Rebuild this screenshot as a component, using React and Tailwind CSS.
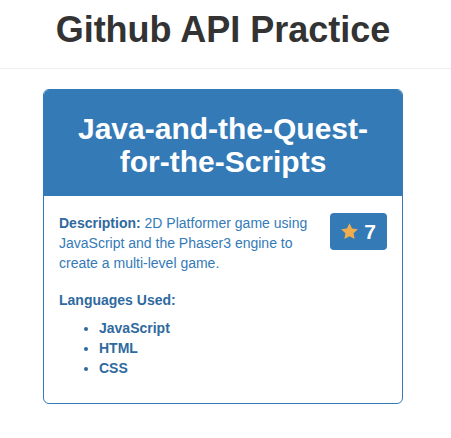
import React from 'react';

const Star = () => (
  <svg viewBox="0 0 24 24" className="w-[19px] h-[19px]" fill="#f0ad4e">
    <path d="M12 1.5l3.2 6.6 7.3 1-5.3 5.1 1.3 7.2L12 18l-6.5 3.4 1.3-7.2L1.5 9.1l7.3-1z" />
  </svg>
);

const App = () => {
  const languages = ['JavaScript', 'HTML', 'CSS'];
  return (
    <div className="min-h-screen bg-white font-['Liberation_Sans',Arial,sans-serif] text-[14px] leading-[20px]">
      {/* page header */}
      <div className="border-b border-[#eeeeee] pt-[10px] pb-[18px]">
        <h1 className="w-[446px] text-center text-[36px] leading-[40px] font-bold text-[#333333]">
          Github API Practice
        </h1>
      </div>

      <div className="w-[446px] pt-5">
        {/* repo panel */}
        <div className="mx-auto w-[360px] border border-[#337ab7] rounded-[6px] overflow-hidden">
          <div className="bg-[#337ab7] px-[15px] pt-[22px] pb-[18px]">
            <h2 className="text-center text-white text-[30px] leading-[33px] font-bold">
              Java-and-the-Quest-for-the-Scripts
            </h2>
          </div>

          <div className="px-[15px] pt-[17px] pb-[15px] text-[#337ab7]">
            <div className="flex items-start gap-4">
              <p className="flex-1">
                <span className="font-bold text-[#2f6a9f]">Description:</span> 2D Platformer game using
                JavaScript and the Phaser3 engine to create a multi-level game.
              </p>
              <div className="flex items-center gap-[5px] bg-[#337ab7] rounded-[4px] pl-[10px] pr-[11px] h-[37px]">
                <Star />
                <span className="text-white font-bold text-[21px] leading-none">7</span>
              </div>
            </div>

            <h5 className="mt-[17px] font-bold text-[#2f6a9f]">Languages Used:</h5>
            <ul className="mt-2 mb-[10px] pl-10 list-disc">
              {languages.map((lang) => (
                <li key={lang} className="font-bold text-[#2f6a9f]">
                  {lang}
                </li>
              ))}
            </ul>
          </div>
        </div>
      </div>
    </div>
  );
};

export default App;
